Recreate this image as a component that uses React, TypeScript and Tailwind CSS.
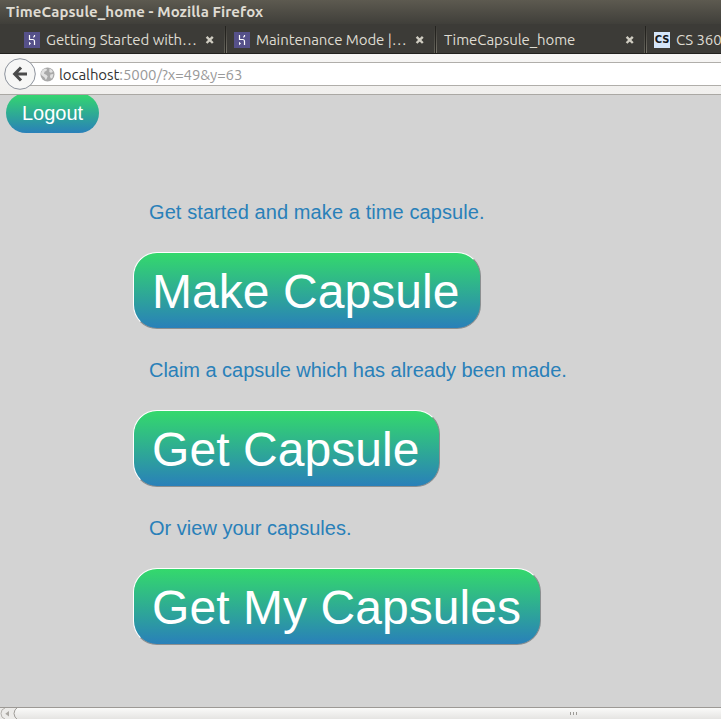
import React from 'react';

const uiFont = "font-['Ubuntu','Noto_Sans','Open_Sans',sans-serif]";

function Heroku() {
  return (
    <svg className="block h-4 w-4 shrink-0" viewBox="0 0 16 16">
      <rect width="16" height="16" fill="#56518a" />
      <path d="M5.5 3v4.5h3.2q1.8 0 1.8 2V13" fill="none" stroke="#fff" strokeWidth="1.2" />
      <path d="M10.5 3v1L9.4 5.4" fill="none" stroke="#fff" strokeWidth="1.2" />
      <path d="M5 9.8v3.4l2-1.7z" fill="#fff" />
    </svg>
  );
}

function Close() {
  return (
    <svg className="block h-2.5 w-2.5 shrink-0" viewBox="0 0 10 10">
      <path d="M1.6 1.8l6.2 6.2M7.8 1.8l-6.2 6.2" stroke="#cfccc1" strokeWidth="2.4" />
    </svg>
  );
}

function Divider() {
  return (
    <div className="flex h-[27px] w-[3px] shrink-0 justify-between self-end">
      <i className="w-px bg-gradient-to-b from-[#3c3b37] to-[#65635a]" />
      <i className="w-px bg-[#252420]" />
      <i className="w-px bg-gradient-to-b from-[#3c3b37] to-[#77746a]" />
    </div>
  );
}

function Tab({ icon, text, textWidth }: { icon?: React.ReactNode; text: string; textWidth: string }) {
  return (
    <>
      {icon}
      <span className={`${icon ? 'ml-1.5' : ''} ${textWidth} shrink-0 tracking-[-0.07px] whitespace-nowrap`}>{text}</span>
    </>
  );
}

function BigButton({ children, width }: { children: string; width: string }) {
  return (
    <button
      className={`${width} ml-[133px] block h-[77px] rounded-[24px] border border-t-white border-l-white border-r-[#8b8f90] border-b-[#8b8f90] bg-linear-to-b/srgb from-[#34d96c] to-[#2980b9] pt-[2px] pl-[18px] text-left text-[48px] leading-[73px] tracking-[0.06px] whitespace-nowrap text-white`}
    >
      {children}
    </button>
  );
}

function Caption({ children, tracking }: { children: string; tracking: string }) {
  return <p className={`${tracking} ml-[149px] h-[24px] text-[20px] leading-[24px] whitespace-nowrap text-[#2980b9]`}>{children}</p>;
}

export default function App() {
  return (
    <div className="flex h-[719px] w-[721px] flex-col overflow-hidden bg-[#d3d3d3]">
      <header className={`${uiFont} shrink-0 text-[#dfdbd2]`}>
        <div className="h-6 bg-gradient-to-b from-[#5d5a50] to-[#403f3a] pl-[6px] text-[15px] leading-6 font-bold tracking-[0.07px] whitespace-nowrap">
          TimeCapsule_home - Mozilla Firefox
        </div>
        <div className="flex h-[30px] items-center overflow-hidden border-b border-[#22211e] bg-[#3c3b37] pt-[2px] pl-6 text-[15px] leading-5">
          <Tab icon={<Heroku />} text="Getting Started with…" textWidth="w-[159px]" />
          <Close />
          <div className="w-[9px] shrink-0" />
          <Divider />
          <div className="w-[7px] shrink-0" />
          <Tab icon={<Heroku />} text="Maintenance Mode |…" textWidth="w-[159px]" />
          <Close />
          <div className="w-[9px] shrink-0" />
          <Divider />
          <div className="w-[7px] shrink-0" />
          <Tab text="TimeCapsule_home" textWidth="w-[181px]" />
          <Close />
          <div className="w-[9px] shrink-0" />
          <Divider />
          <div className="w-[7px] shrink-0" />
          <Tab
            icon={<span className="h-4 w-4 shrink-0 bg-[#d5e6fa] text-center font-['DejaVu_Sans',sans-serif] text-[10px] leading-4 font-bold text-[#14171a]">CS</span>}
            text="CS 360"
            textWidth="w-[60px]"
          />
        </div>
      </header>

      <div className={`${uiFont} relative h-[41px] shrink-0 border-b border-[#aaa8a4] bg-gradient-to-b from-[#f7f6f5] to-[#f0efed] pt-2 text-[15px]`}>
        <div className="ml-5 flex h-6 items-center border-y border-[#b0aeaa] bg-white pl-5">
          <svg className="h-[15px] w-[15px] shrink-0" viewBox="0 0 15 15">
            <circle cx="7.5" cy="7.5" r="7" fill="#a9a9a9" />
            <path d="M1 6l1.5-3L5 1.5l2 .7-.5 1.6-2 1-.5 2 2.2.9 1.5 1.5-.8 2-1 1.8-1.4-2.6L1.3 8zM9.5 1.6l2.4 1.5 1 2-2 .6-1.6-.8zM10.4 7.4l3-.4-.8 3.5-1.6 1.3-1-2z" fill="#e2e2e2" />
          </svg>
          <span className="ml-1 pt-[2px] tracking-[-0.08px] text-[#999]">
            <span className="text-[#333]">localhost</span>:5000/?x=49&amp;y=63
          </span>
        </div>
        <svg className="absolute top-[4px] left-[4px] h-8 w-8" viewBox="0 0 32 32">
          <circle cx="16" cy="16" r="15.3" fill="#f7f7f6" stroke="#8c929c" />
          <path d="M17 9.5L10.7 16l6.3 6.5M11.5 16H23" fill="none" stroke="#4b4b4b" strokeWidth="3.1" />
        </svg>
      </div>

      <main className="min-h-0 flex-1 overflow-hidden font-['Liberation_Sans',Arial,sans-serif]">
        <button className="-mt-[2px] ml-[6px] block h-10 w-[93px] rounded-[20px] bg-linear-to-b/srgb from-[#34d96c] to-[#2980b9] text-[20px] leading-10 text-white">
          Logout
        </button>
        <div className="h-[67px]" />
        <Caption tracking="tracking-[0.09px]">Get started and make a time capsule.</Caption>
        <div className="h-7" />
        <BigButton width="w-[348px]">Make Capsule</BigButton>
        <div className="h-[29px]" />
        <Caption tracking="tracking-[-0.03px]">Claim a capsule which has already been made.</Caption>
        <div className="h-7" />
        <BigButton width="w-[307px]">Get Capsule</BigButton>
        <div className="h-[29px]" />
        <Caption tracking="tracking-[0.01px]">Or view your capsules.</Caption>
        <div className="h-7" />
        <BigButton width="w-[408px]">Get My Capsules</BigButton>
      </main>

      <footer className="h-3 shrink-0 border-t border-[#9c9995] bg-[#ecebe9]">
        <svg className="block h-[11px] w-[721px]" viewBox="0 0 721 11">
          <defs>
            <linearGradient id="thumb" x1="0" y1="0" x2="0" y2="1">
              <stop stopColor="#fcfcfb" />
              <stop offset="1" stopColor="#e3e2e0" />
            </linearGradient>
          </defs>
          <path d="M5 0Q1 1 1 5.5T5 11" fill="none" stroke="#b5b2ae" />
          <path d="M9 3v5.5L5.3 5.7z" fill="#aaa7a2" />
          <path d="M722 -1H18q-4 2.5-4 6.5t4 6.5H722" fill="url(#thumb)" stroke="#9f9c98" />
          <path d="M570.5 4v3M573.5 4v3M576.5 4v3" stroke="#9c9a96" />
        </svg>
      </footer>
    </div>
  );
}
